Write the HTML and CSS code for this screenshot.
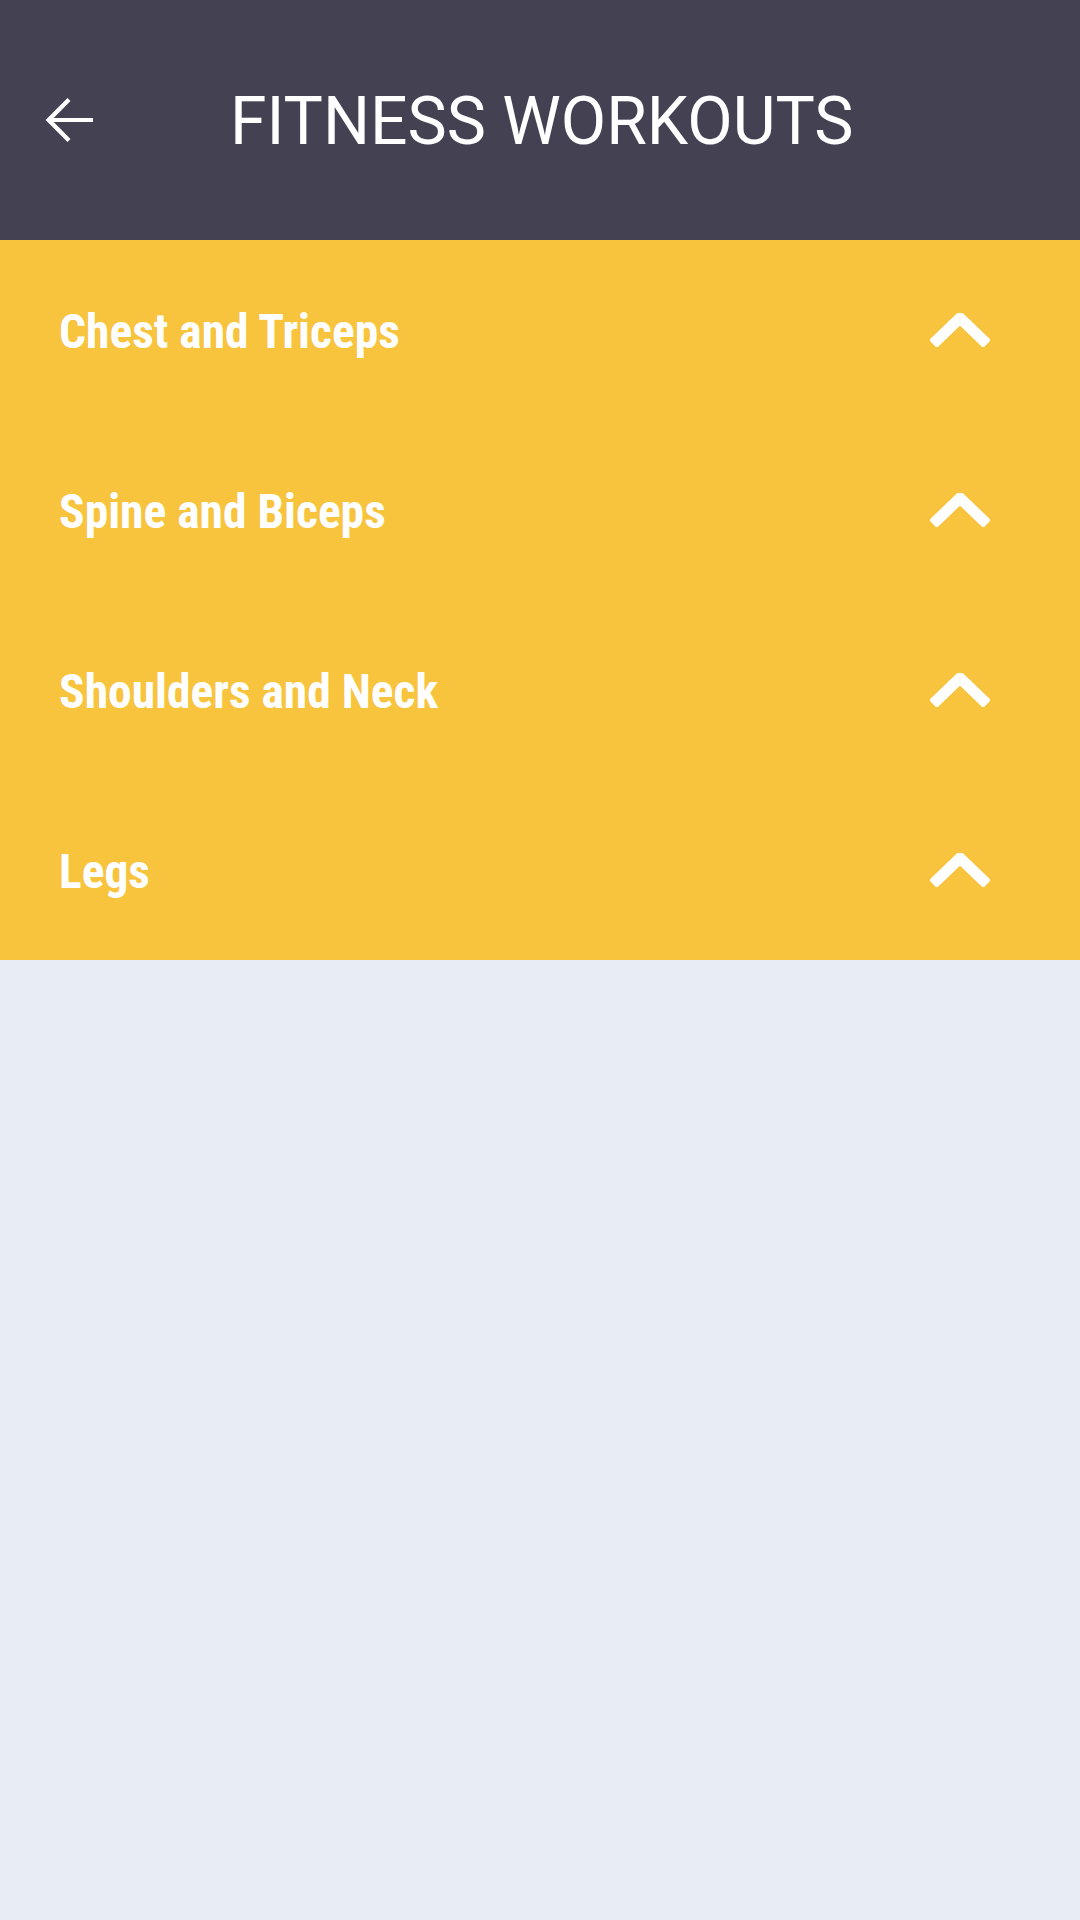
FILE: index.html
```html
<!DOCTYPE html>
<html lang="en">
  <head>
    <meta charset="UTF-8" />
    <meta name="viewport" content="width=device-width, initial-scale=1.0" />
    <title>Fitness Workouts</title>
    <link rel="stylesheet" href="styles.css">
  </head>
  <body>
    <div class="toolbar">
      <button class="back" aria-label="Back">
        <svg viewBox="0 0 24 24" width="72" height="72">
          <path d="M20 11.3H6.9l5.6-5.6-1-1L4.2 12l7.3 7.3 1-1-5.6-5.6H20z" fill="#fff" />
        </svg>
      </button>
      <h1>FITNESS WORKOUTS</h1>
    </div>

    <ul class="groups">
      <li class="group">
        <span>Chest and Triceps</span>
        <svg class="chevron" viewBox="0 0 60 34"><polyline points="3,31 30,5 57,31" /></svg>
      </li>
      <li class="group">
        <span>Spine and Biceps</span>
        <svg class="chevron" viewBox="0 0 60 34"><polyline points="3,31 30,5 57,31" /></svg>
      </li>
      <li class="group">
        <span>Shoulders and Neck</span>
        <svg class="chevron" viewBox="0 0 60 34"><polyline points="3,31 30,5 57,31" /></svg>
      </li>
      <li class="group">
        <span>Legs</span>
        <svg class="chevron" viewBox="0 0 60 34"><polyline points="3,31 30,5 57,31" /></svg>
      </li>
    </ul>
  </body>
</html>
```

FILE: styles.css
```css
html,
body {
  margin: 0;
  padding: 0;
  height: 100%;
}
body {
  background-color: #e8ecf5;
  font-family: Roboto, "Noto Sans", sans-serif;
}
.toolbar {
  height: 240px;
  background-color: #444152;
  display: flex;
  align-items: center;
}
.back {
  background: none;
  border: none;
  padding: 0;
  margin-left: 33px;
  width: 72px;
  height: 72px;
  cursor: pointer;
}
.back svg {
  display: block;
}
.toolbar h1 {
  margin: 4px 0 0 125px;
  color: #fff;
  font-size: 66px;
  font-weight: 400;
  line-height: 1;
}
.groups {
  list-style: none;
  margin: 0;
  padding: 0;
  background-color: #f8c33d;
}
.group {
  height: 180px;
  display: flex;
  align-items: center;
  justify-content: space-between;
  padding: 0 90px 0 59px;
}
.group span {
  color: #fff;
  font-family: "Roboto Condensed", "Liberation Sans Narrow", Roboto, sans-serif;
  font-weight: 700;
  font-size: 47.5px;
  padding-top: 4px;
}
.chevron {
  width: 60px;
  height: 34px;
}
.chevron polyline {
  fill: none;
  stroke: #fff;
  stroke-width: 11;
}
```
